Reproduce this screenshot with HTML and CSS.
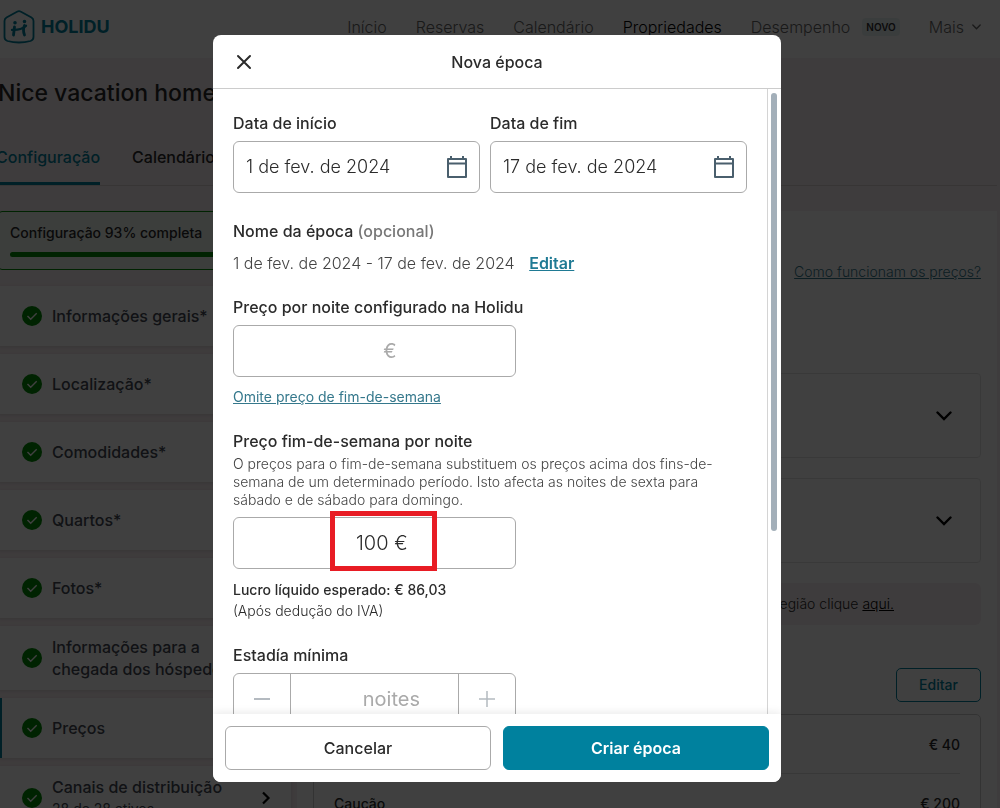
FILE: index.html
```html
<!DOCTYPE html>
<html lang="pt">
<head>
    <meta charset="UTF-8">
    <meta name="viewport" content="width=device-width, initial-scale=1.0">
    <title>Holidu - Nova época</title>
    <link rel="stylesheet" href="styles.css">
</head>
<body>

<!-- Shared icons -->
<svg class="icon-defs" aria-hidden="true">
    <symbol id="check" viewBox="0 0 20 20">
        <circle cx="10" cy="10" r="10" fill="#008a05"/>
        <path d="M5.5 10l3.2 3.3 6-6.1" fill="none" stroke="#fff" stroke-width="1.4"/>
    </symbol>
    <symbol id="calendar" viewBox="0 0 22 24">
        <path d="M2 4h18v18H2zM2 8.5h18M5 1v3M17 1v3" fill="none" stroke="#4a5f6d" stroke-width="2" stroke-linejoin="round"/>
    </symbol>
    <symbol id="chevron" viewBox="0 0 16 10">
        <path d="M1.5 1.5L8 8l6.5-6.5" fill="none" stroke="currentColor" stroke-width="2.4" stroke-linecap="round"/>
    </symbol>
</svg>

<div class="page">
    <!-- Top bar -->
    <header class="topbar">
        <a href="#" class="logo">
            <svg width="32" height="34" viewBox="0 0 32 34" fill="none" stroke="#007f9c" stroke-linecap="round">
                <path d="M14 1.7Q16 .7 18 1.7L28.5 7.5Q30.5 8.7 30.5 11V27Q30.5 30 27.5 31Q16 34 4.5 31Q1.5 30 1.5 27V11Q1.5 8.7 3.5 7.5Z" stroke-width="1.8"/>
                <path d="M11.5 17L10.500 25M21.5 15.5Q19.5 20 21.5 25" stroke-width="2.8"/>
                <path d="M9 19.8Q17 20.5 23 15.8" stroke-width="2.3"/>
                <circle cx="12" cy="12.8" r="1" fill="#007f9c" stroke-width="1.6"/>
                <circle cx="21.5" cy="11.5" r="1" fill="#007f9c" stroke-width="1.6"/>
            </svg>
            <span>HOLIDU</span>
        </a>
        <nav class="nav">
            <a href="#">Início</a>
            <a href="#">Reservas</a>
            <a href="#">Calendário</a>
            <a href="#" class="current">Propriedades</a>
            <a href="#" class="with-badge">Desempenho <span class="badge">NOVO</span></a>
            <a href="#" class="more">Mais <svg width="9" height="6"><use href="#chevron"/></svg></a>
        </nav>
    </header>

    <main class="content">
        <h1>Nice vacation home</h1>
        <div class="tabs">
            <a href="#" class="active">Configuração</a>
            <a href="#">Calendário</a>
        </div>

        <div class="columns">
            <!-- Setup steps -->
            <aside class="steps">
                <div class="progress">
                    <p>Configuração 93% completa</p>
                    <div class="bar"><div class="bar-fill" style="width: 93%"></div></div>
                </div>
                <a href="#" class="step"><svg class="check"><use href="#check"/></svg><span>Informações gerais*</span></a>
                <a href="#" class="step"><svg class="check"><use href="#check"/></svg><span>Localização*</span></a>
                <a href="#" class="step"><svg class="check"><use href="#check"/></svg><span>Comodidades*</span></a>
                <a href="#" class="step"><svg class="check"><use href="#check"/></svg><span>Quartos*</span></a>
                <a href="#" class="step"><svg class="check"><use href="#check"/></svg><span>Fotos*</span></a>
                <a href="#" class="step"><svg class="check"><use href="#check"/></svg><span>Informações para a<br>chegada dos hóspedes</span></a>
                <a href="#" class="step selected"><svg class="check"><use href="#check"/></svg><span>Preços</span></a>
                <a href="#" class="step">
                    <svg class="check"><use href="#check"/></svg>
                    <span>Canais de distribuição<small>28 de 28 ativos</small></span>
                    <svg class="arrow" width="10" height="14" viewBox="0 0 10 14"><path d="M2 1.5L7.5 7 2 12.5" fill="none" stroke="#000" stroke-width="2.2"/></svg>
                </a>
            </aside>

            <!-- Prices -->
            <section class="prices">
                <a href="#" class="help">Como funcionam os preços?</a>
                <button class="accordion" aria-label="Preço base"><svg width="16" height="10"><use href="#chevron"/></svg></button>
                <button class="accordion" aria-label="Descontos"><svg width="16" height="10"><use href="#chevron"/></svg></button>
                <p class="notice">Para impostos da sua região clique&nbsp;<a href="#">aqui.</a></p>
                <button class="edit">Editar</button>
                <dl class="fees">
                    <div><dt></dt><dd>€ 40</dd></div>
                    <div><dt>Caução</dt><dd>€ 200</dd></div>
                </dl>
            </section>
        </div>
    </main>
</div>

<!-- New season dialog -->
<div class="overlay">
    <div class="modal" role="dialog" aria-labelledby="modalTitle">
        <div class="modal-header">
            <button class="close" aria-label="Fechar">
                <svg width="16" height="16" viewBox="0 0 16 16"><path d="M2 2l12 12M14 2L2 14" stroke="#2b2b2b" stroke-width="2" stroke-linecap="round"/></svg>
            </button>
            <h2 id="modalTitle">Nova época</h2>
        </div>

        <div class="modal-body">
            <form class="form">
                <div class="dates">
                    <div class="date">
                        <label for="start">Data de início</label>
                        <div class="field">
                            <input type="text" id="start" value="1 de fev. de 2024">
                            <svg width="22" height="24"><use href="#calendar"/></svg>
                        </div>
                    </div>
                    <div class="date">
                        <label for="end">Data de fim</label>
                        <div class="field">
                            <input type="text" id="end" value="17 de fev. de 2024">
                            <svg width="22" height="24"><use href="#calendar"/></svg>
                        </div>
                    </div>
                </div>

                <div class="season-name">
                    <h3>Nome da época <span>(opcional)</span></h3>
                    <p>1 de fev. de 2024 - 17 de fev. de 2024 <a href="#">Editar</a></p>
                </div>

                <div class="group">
                    <label for="price">Preço por noite configurado na Holidu</label>
                    <div class="field narrow">
                        <input type="text" id="price" class="amount" placeholder="€">
                    </div>
                    <a href="#" class="omit">Omite preço de fim-de-semana</a>
                </div>

                <div class="group">
                    <label for="weekend">Preço fim-de-semana por noite</label>
                    <p class="hint">O preços para o fim-de-semana substituem os preços acima dos fins-de-semana de um determinado período. Isto afecta as noites de sexta para sábado e de sábado para domingo.</p>
                    <div class="field narrow">
                        <input type="text" id="weekend" class="amount filled" value="100 €">
                        <div class="highlight"></div>
                    </div>
                    <p class="profit"><strong>Lucro líquido esperado: € 86,03</strong><br>(Após dedução do IVA)</p>
                </div>

                <div class="group">
                    <label for="nights">Estadía mínima</label>
                    <div class="field narrow stepper">
                        <button type="button" aria-label="Menos"><svg width="16" height="16"><path d="M0 8h16" stroke="#b4bac0" stroke-width="2"/></svg></button>
                        <input type="text" id="nights" class="amount" placeholder="noites">
                        <button type="button" aria-label="Mais"><svg width="16" height="16"><path d="M0 8h16M8 0v16" stroke="#b4bac0" stroke-width="1.5"/></svg></button>
                    </div>
                </div>
            </form>
            <div class="scrollbar"><div class="thumb"></div></div>
        </div>

        <div class="modal-footer">
            <button class="btn">Cancelar</button>
            <button class="btn primary">Criar época</button>
        </div>
    </div>
</div>

</body>
</html>
```
FILE: styles.css
```css
* {
    box-sizing: border-box;
    margin: 0;
    padding: 0;
}

body {
    font-family: Inter, "Liberation Sans", sans-serif;
    font-size: 16px;
    line-height: 20px;
    color: #2b2b2b;
    background-color: #f8eff1;
}

button,
input {
    font: inherit;
    color: inherit;
    background: none;
    border: none;
}

a {
    color: inherit;
    text-decoration: none;
}

svg {
    flex-shrink: 0;
}

.icon-defs {
    display: none;
}

.page {
    height: 100vh;
    overflow: hidden;
}

/* Top bar */
.topbar {
    display: flex;
    justify-content: space-between;
    align-items: center;
    height: 58px;
    padding: 0 19px 4px 3px;
    background-color: #fff;
}

.logo {
    display: flex;
    align-items: center;
    gap: 6px;
    color: #007f9c;
    font-size: 18px;
    font-weight: 700;
}

.nav {
    display: flex;
    gap: 29px;
    color: #666;
    font-weight: 300;
}

.nav .current {
    color: #000;
}

.with-badge {
    display: flex;
    align-items: center;
    gap: 12px;
}

.badge {
    padding: 0 4px;
    border-radius: 4px;
    background-color: #e8f2f4;
    color: #333;
    font-size: 10px;
    font-weight: 600;
    line-height: 18px;
}

.more {
    display: flex;
    align-items: center;
    gap: 8px;
}

/* Page content */
.content {
    margin-left: -2px;
    padding-right: 3px;
}

h1 {
    padding: 21px 0 0;
    font-size: 23px;
    font-weight: 500;
    line-height: 28px;
}

.tabs {
    display: flex;
    gap: 32px;
    margin: 40px 0 0 -2px;
    border-bottom: 1px solid #d9d2d3;
    font-weight: 500;
}

.tabs a {
    padding-bottom: 18px;
}

.tabs .active {
    color: #007f9c;
    box-shadow: inset 0 -3px #007f9c;
}

.columns {
    display: flex;
    gap: 6px;
    padding-top: 25px;
}

/* Setup steps */
.steps {
    display: flex;
    flex-direction: column;
    flex-shrink: 0;
    gap: 8px;
    width: 293px;
}

.progress {
    height: 59px;
    margin-bottom: 8px;
    padding: 11px;
    border: 1px solid #008a05;
    border-radius: 4px;
    background-color: #eef5ee;
    font-size: 14px;
    font-weight: 500;
}

.bar {
    height: 5px;
    margin-top: 9px;
    border-radius: 4px;
    background-color: #d5e5d5;
}

.bar-fill {
    height: 5px;
    border-radius: 4px;
    background-color: #008a05;
}

.step {
    display: flex;
    align-items: center;
    gap: 10px;
    min-height: 60px;
    padding: 10px 20px 10px 24px;
    background-color: #fff;
    color: #454a55;
    box-shadow: 0 1px 4px rgba(0, 0, 0, 0.12);
    font-weight: 500;
    line-height: 22px;
}

.step.selected {
    border-left: 4px solid #007f9c;
    padding-left: 20px;
}

.step small {
    display: block;
    font-size: 14px;
    font-weight: 400;
}

.check {
    width: 20px;
    height: 20px;
}

.arrow {
    margin-left: auto;
}

/* Prices */
.prices {
    display: flex;
    flex: 1;
    flex-direction: column;
    gap: 20px;
    padding: 51px 16px 0;
    background-color: #fff;
}

.help {
    align-self: flex-end;
    margin-bottom: 71px;
    color: #35788c;
    font-size: 14px;
    font-weight: 300;
    text-decoration: underline;
}

.accordion {
    display: flex;
    justify-content: flex-end;
    align-items: center;
    height: 85px;
    padding-right: 28px;
    border: 1px solid #e4e4e4;
    border-radius: 4px;
    color: #000;
}

.notice {
    display: flex;
    justify-content: flex-end;
    padding: 11px 87px 11px 16px;
    border-radius: 6px;
    background-color: #f8eff1;
    font-size: 14px;
    font-weight: 300;
}

.notice a {
    color: #000;
    text-decoration: underline;
}

.edit {
    align-self: flex-end;
    width: 85px;
    height: 34px;
    margin-top: 23px;
    border: 1px solid #007f9c;
    border-radius: 5px;
    color: #007f9c;
    font-size: 14px;
    font-weight: 500;
}

.fees {
    margin-top: -8px;
    padding: 0 20px;
    border: 1px solid #ccc;
    border-radius: 5px;
    font-size: 14px;
    font-weight: 500;
}

.fees div {
    display: flex;
    justify-content: space-between;
    padding: 20px 0 18px;
    border-bottom: 1px solid #ddd;
}

/* Dialog */
.overlay {
    position: fixed;
    inset: 0;
    display: flex;
    justify-content: center;
    padding: 35px 6px 26px 0;
    background-color: rgba(0, 0, 0, 0.75);
}

.modal {
    display: flex;
    flex-direction: column;
    width: 100%;
    max-width: 568px;
    border-radius: 8px;
    background-color: #fff;
    overflow: hidden;
}

.modal-header {
    display: flex;
    align-items: center;
    height: 54px;
    padding: 0 20px;
    border-bottom: 1px solid #ccc;
}

.modal-header h2 {
    flex: 1;
    margin-right: 22px;
    font-size: 16px;
    font-weight: 500;
    text-align: center;
}

.close {
    display: flex;
    justify-content: center;
    width: 22px;
}

.modal-body {
    display: flex;
    flex: 1;
    min-height: 0;
}

.form {
    display: flex;
    flex: 1;
    flex-direction: column;
    gap: 24px;
    min-width: 0;
    padding: 24px 20px;
    overflow: hidden;
}

.form label,
.form h3 {
    display: block;
    font-size: 16px;
    font-weight: 500;
}

.dates {
    display: flex;
}

.date {
    width: 50%;
}

.date:first-child {
    padding-right: 10px;
}

.field {
    position: relative;
    display: flex;
    align-items: center;
    height: 52px;
    margin-top: 8px;
    padding: 0 11px 0 12px;
    border: 1px solid #aaa;
    border-radius: 6px;
}

.field input {
    flex: 1;
    min-width: 0;
    font-size: 18px;
    line-height: 24px;
    font-weight: 300;
    outline: none;
}

.field input::placeholder {
    color: #aaa;
    font-weight: 400;
    opacity: 1;
}

.field.narrow {
    width: 55%;
}

.field .amount {
    padding-left: 30px;
    font-size: 20px;
    text-align: center;
}

.field .amount.filled {
    padding-left: 14px;
}

.season-name {
    margin-top: 4px;
}

.season-name span {
    color: #777;
}

.season-name p {
    margin-top: 12px;
    color: #444;
    font-weight: 300;
}

.season-name a {
    margin-left: 10px;
    color: #1f7a94;
    font-weight: 600;
    text-decoration: underline;
}

.omit {
    display: block;
    margin-top: 10px;
    color: #35788c;
    font-size: 14px;
    text-decoration: underline;
}

.hint {
    margin-top: 4px;
    color: #444;
    font-size: 14px;
    font-weight: 300;
    line-height: 18px;
}

.highlight {
    position: absolute;
    top: -7px;
    left: 96px;
    width: 107px;
    height: 60px;
    border: 5px solid #e81c24;
    pointer-events: none;
}

.profit {
    margin-top: 10px;
    font-size: 14px;
    font-weight: 300;
    line-height: 21px;
}

.profit strong {
    font-weight: 500;
}

.field.stepper {
    padding: 0;
    align-items: stretch;
}

.stepper button {
    width: 57px;
    padding-top: 4px;
}

.stepper button:first-child {
    border-right: 1px solid #aaa;
}

.stepper button:last-child {
    border-left: 1px solid #aaa;
}

.stepper .amount {
    padding-left: 34px;
}

.scrollbar {
    width: 14px;
    padding: 4px 3px;
    border-left: 1px solid #d4d4d4;
}

.thumb {
    width: 6px;
    height: 71%;
    border-radius: 3px;
    background-color: #a3afb9;
}

.modal-footer {
    position: relative;
    display: flex;
    gap: 12px;
    padding: 12px;
    background-color: #fff;
    box-shadow: 0 -2px 8px rgba(0, 0, 0, 0.08);
}

.btn {
    flex: 1;
    height: 44px;
    border: 1px solid #aaa;
    border-radius: 6px;
    font-weight: 500;
}

.btn.primary {
    border-color: #00819e;
    background-color: #00819e;
    color: #fff;
    font-weight: 600;
}
```
